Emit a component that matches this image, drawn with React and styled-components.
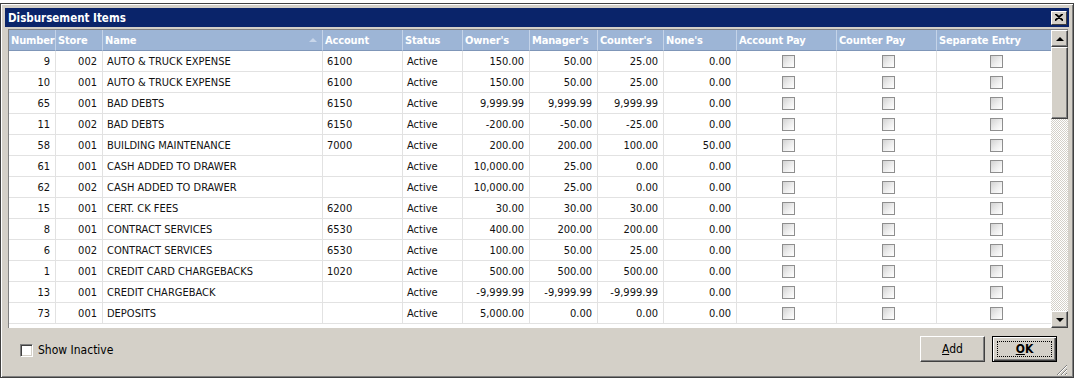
import React from "react";
import styled, { createGlobalStyle } from "styled-components";

const GlobalStyle = createGlobalStyle`
  html, body {
    margin: 0;
    padding: 0;
    background: #ffffff;
  }
  body {
    font-family: "DejaVu Sans Condensed", "DejaVu Sans", "Liberation Sans", sans-serif;
    font-size: 11px;
  }
`;

const COLS = "47px 47px 220px 80px 60px 67px 68px 66px 73px 100px 100px 115px";

const Window = styled.div`
  box-sizing: border-box;
  margin-top: 3px;
  width: 1074px;
  height: 375px;
  border: 1px solid #404040;
  box-shadow: inset 1px 1px 0 #ffffff, inset -1px -1px 0 #808080;
  background: #d4d0c8;
  padding: 4px 4px 0 4px;
  display: flex;
  flex-direction: column;
`;

const TitleBar = styled.div`
  height: 19px;
  background: #0a246a;
  display: flex;
  align-items: center;
  justify-content: space-between;
  padding: 0 2px 0 3px;
`;

const Title = styled.span`
  color: #ffffff;
  font-weight: bold;
  font-size: 11.5px;
`;

const CloseBtn = styled.div`
  box-sizing: border-box;
  width: 16px;
  height: 14px;
  background: #d4d0c8;
  border: 1px solid;
  border-color: #ffffff #404040 #404040 #ffffff;
  display: flex;
  align-items: center;
  justify-content: center;
`;

const GridFrame = styled.div`
  margin: 2px 1px 0 3px;
  display: flex;
  height: 298px;
  border-left: 1px solid #808080;
  border-top: 1px solid #808080;
  background: #ffffff;
`;

const Table = styled.div`
  width: 1043px;
  overflow: hidden;
`;

const Row = styled.div`
  display: grid;
  grid-template-columns: ${COLS};
  height: 21px;
`;

const HeadCell = styled.div`
  box-sizing: border-box;
  background: #9db5d6;
  color: #ffffff;
  font-weight: bold;
  letter-spacing: -0.15px;
  display: flex;
  align-items: center;
  padding-left: 2px;
  border-right: 1px solid #c4d3e8;
  border-bottom: 1px solid #7f96b8;
  position: relative;
  white-space: nowrap;
  overflow: hidden;
`;

const SortArrow = styled.span`
  position: absolute;
  right: 5px;
  top: 8px;
  width: 0;
  height: 0;
  border-left: 4px solid transparent;
  border-right: 4px solid transparent;
  border-bottom: 4px solid #c8d6ea;
`;

const Cell = styled.div`
  box-sizing: border-box;
  color: #111111;
  display: flex;
  align-items: center;
  justify-content: ${(p) => (p.$align === "right" ? "flex-end" : p.$align === "center" ? "center" : "flex-start")};
  padding: ${(p) => (p.$align === "right" ? "0 5px 0 0" : "0 0 0 4px")};
  border-right: 1px solid #e2e2e2;
  border-bottom: 1px solid #e2e2e2;
  white-space: nowrap;
  overflow: hidden;
`;

const GridCheck = styled.span`
  box-sizing: border-box;
  width: 13px;
  height: 13px;
  border: 1px solid #8e8e8e;
  background: linear-gradient(135deg, #d2d2d2 0%, #eeeeee 55%, #ffffff 100%);
`;

const ScrollBar = styled.div`
  width: 17px;
  display: flex;
  flex-direction: column;
  background-color: #ffffff;
  background-image: repeating-conic-gradient(#d4d0c8 0 25%, #ffffff 0 50%);
  background-size: 2px 2px;
`;

const ScrollBtn = styled.div`
  box-sizing: border-box;
  width: 17px;
  height: 17px;
  flex: none;
  background: #d4d0c8;
  border: 1px solid;
  border-color: #ffffff #404040 #404040 #ffffff;
  box-shadow: inset -1px -1px 0 #808080;
  display: flex;
  align-items: center;
  justify-content: center;
  margin-top: ${(p) => (p.$bottom ? "auto" : "0")};
`;

const Arrow = styled.span`
  width: 0;
  height: 0;
  border-left: 4px solid transparent;
  border-right: 4px solid transparent;
  ${(p) => (p.$down ? "border-top: 4px solid #000;" : "border-bottom: 4px solid #000;")}
`;

const Thumb = styled.div`
  box-sizing: border-box;
  height: 72px;
  flex: none;
  background: #d4d0c8;
  border: 1px solid;
  border-color: #ffffff #404040 #404040 #ffffff;
  box-shadow: inset -1px -1px 0 #808080;
`;

const Footer = styled.div`
  flex: 1;
  display: flex;
  align-items: flex-start;
  justify-content: space-between;
  padding: 8px 12px 0 15px;
  position: relative;
`;

const ShowInactive = styled.label`
  display: flex;
  align-items: center;
  gap: 5px;
  margin-top: 7px;
  color: #000000;
  font-size: 12px;
`;

const ClassicCheck = styled.span`
  box-sizing: border-box;
  width: 13px;
  height: 13px;
  background: #ffffff;
  border: 1px solid;
  border-color: #808080 #ffffff #ffffff #808080;
  box-shadow: inset 1px 1px 0 #404040, inset -1px -1px 0 #d4d0c8;
`;

const Buttons = styled.div`
  display: flex;
  gap: 7px;
`;

const Button = styled.div`
  box-sizing: border-box;
  width: 65px;
  height: 26px;
  background: #d4d0c8;
  color: #000000;
  font-size: 12px;
  font-weight: ${(p) => (p.$default ? "bold" : "normal")};
  display: flex;
  align-items: center;
  justify-content: center;
  border: 1px solid;
  border-color: ${(p) => (p.$default ? "#000000" : "#ffffff #404040 #404040 #ffffff")};
  box-shadow: ${(p) =>
    p.$default
      ? "inset 1px 1px 0 #ffffff, inset -1px -1px 0 #404040, inset -2px -2px 0 #808080"
      : "inset -1px -1px 0 #808080"};
  position: relative;
`;

const Focus = styled.span`
  position: absolute;
  inset: 4px;
  border: 1px dotted #000000;
`;

const Grip = styled.svg`
  position: absolute;
  right: 1px;
  bottom: 1px;
`;

const headers = [
  "Number", "Store", "Name", "Account", "Status", "Owner's", "Manager's",
  "Counter's", "None's", "Account Pay", "Counter Pay", "Separate Entry",
];

const rows = [
  ["9", "002", "AUTO & TRUCK EXPENSE", "6100", "150.00", "50.00", "25.00", "0.00"],
  ["10", "001", "AUTO & TRUCK EXPENSE", "6100", "150.00", "50.00", "25.00", "0.00"],
  ["65", "001", "BAD DEBTS", "6150", "9,999.99", "9,999.99", "9,999.99", "0.00"],
  ["11", "002", "BAD DEBTS", "6150", "-200.00", "-50.00", "-25.00", "0.00"],
  ["58", "001", "BUILDING MAINTENANCE", "7000", "200.00", "200.00", "100.00", "50.00"],
  ["61", "001", "CASH ADDED TO DRAWER", "", "10,000.00", "25.00", "0.00", "0.00"],
  ["62", "002", "CASH ADDED TO DRAWER", "", "10,000.00", "25.00", "0.00", "0.00"],
  ["15", "001", "CERT. CK FEES", "6200", "30.00", "30.00", "30.00", "0.00"],
  ["8", "001", "CONTRACT SERVICES", "6530", "400.00", "200.00", "200.00", "0.00"],
  ["6", "002", "CONTRACT SERVICES", "6530", "100.00", "50.00", "25.00", "0.00"],
  ["1", "001", "CREDIT CARD CHARGEBACKS", "1020", "500.00", "500.00", "500.00", "0.00"],
  ["13", "001", "CREDIT CHARGEBACK", "", "-9,999.99", "-9,999.99", "-9,999.99", "0.00"],
  ["73", "001", "DEPOSITS", "", "5,000.00", "0.00", "0.00", "0.00"],
];

export default function App() {
  return (
    <>
      <GlobalStyle />
      <Window>
        <TitleBar>
          <Title>Disbursement Items</Title>
          <CloseBtn>
            <svg width="8" height="7" viewBox="0 0 8 7">
              <path d="M0 0 L8 7 M1 0 L8 6 M8 0 L0 7 M7 0 L0 6" stroke="#000" strokeWidth="1.2" />
            </svg>
          </CloseBtn>
        </TitleBar>
        <GridFrame>
          <Table>
            <Row>
              {headers.map((h) => (
                <HeadCell key={h}>
                  {h}
                  {h === "Name" && <SortArrow />}
                </HeadCell>
              ))}
            </Row>
            {rows.map((r, i) => (
              <Row key={i}>
                <Cell $align="right">{r[0]}</Cell>
                <Cell $align="right">{r[1]}</Cell>
                <Cell>{r[2]}</Cell>
                <Cell>{r[3]}</Cell>
                <Cell>Active</Cell>
                <Cell $align="right">{r[4]}</Cell>
                <Cell $align="right">{r[5]}</Cell>
                <Cell $align="right">{r[6]}</Cell>
                <Cell $align="right">{r[7]}</Cell>
                <Cell $align="center"><GridCheck /></Cell>
                <Cell $align="center"><GridCheck /></Cell>
                <Cell $align="center"><GridCheck /></Cell>
              </Row>
            ))}
          </Table>
          <ScrollBar>
            <ScrollBtn><Arrow /></ScrollBtn>
            <Thumb />
            <ScrollBtn $bottom><Arrow $down /></ScrollBtn>
          </ScrollBar>
        </GridFrame>
        <Footer>
          <ShowInactive>
            <ClassicCheck />
            Show Inactive
          </ShowInactive>
          <Buttons>
            <Button><span><u>A</u>dd</span></Button>
            <Button $default><Focus /><span><u>O</u>K</span></Button>
          </Buttons>
          <Grip width="12" height="12" viewBox="0 0 12 12">
            <path d="M11 1 L1 11 M11 5 L5 11 M11 9 L9 11" stroke="#808080" strokeWidth="1" />
            <path d="M11 2 L2 11 M11 6 L6 11 M11 10 L10 11" stroke="#ffffff" strokeWidth="1" />
          </Grip>
        </Footer>
      </Window>
    </>
  );
}
